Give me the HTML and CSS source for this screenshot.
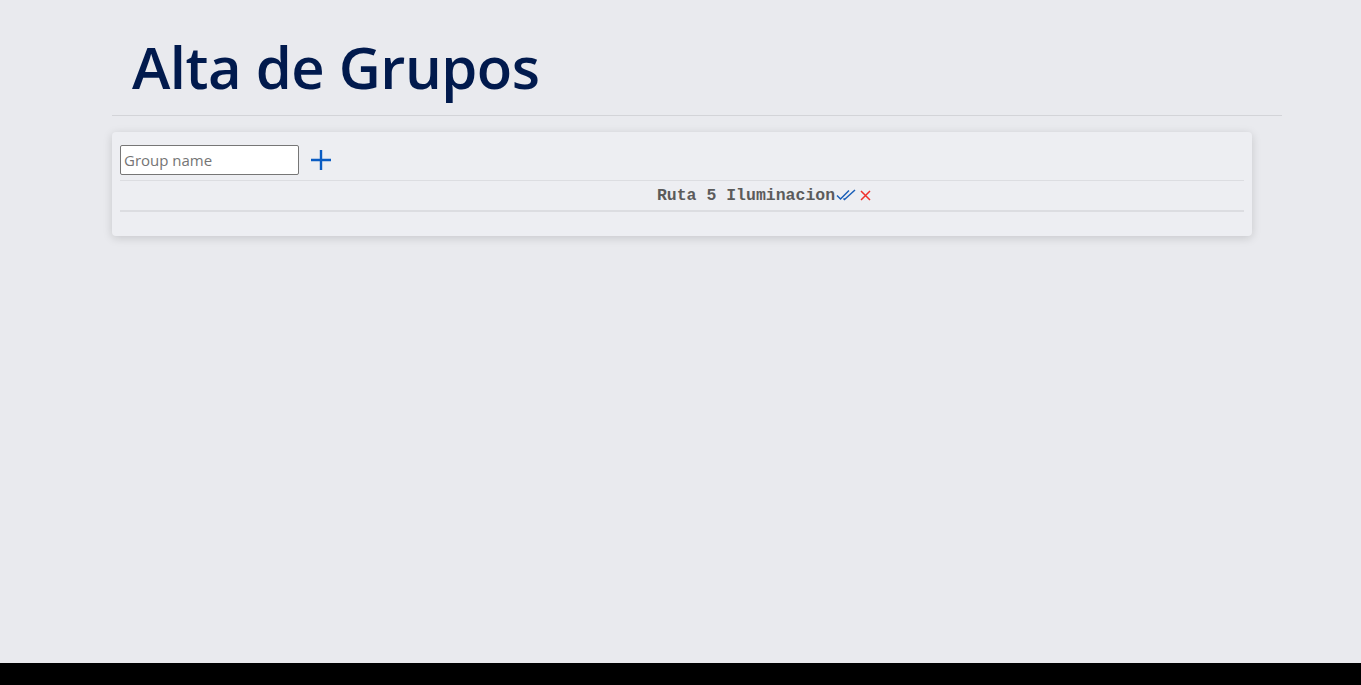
FILE: index.html
```html
<!DOCTYPE html>
<html>
<head>
<meta charset="utf-8">
<link rel="stylesheet" href="styles.css">
</head>
<body>
<div class="page">
  <header class="header">
    <h1 class="title">Alta de Grupos</h1>
  </header>
  <section class="card">
    <div class="add-row">
      <input class="name-input" type="text" placeholder="Group name">
      <button class="add-btn" aria-label="Add">
        <svg width="22" height="22" viewBox="0 0 22 22"><path d="M11 1v20M1 11h20" stroke="#0a5cc2" stroke-width="2.4" fill="none"/></svg>
      </button>
    </div>
    <div class="group-row">
      <span class="group-name">Ruta 5 Iluminacion</span>
      <svg class="icon-check" width="20" height="12" viewBox="0 0 20 12"><path d="M1 6.5l3.5 3.5L13 1.5M7.5 9.5l1 1L19 1" stroke="#1a5fb8" stroke-width="1.5" fill="none"/></svg>
      <svg class="icon-x" width="11" height="11" viewBox="0 0 11 11"><path d="M1 1l9 9M10 1l-9 9" stroke="#f0312c" stroke-width="1.5" fill="none"/></svg>
    </div>
  </section>
</div>
<div class="bottom-bar"></div>
</body>
</html>
```
FILE: styles.css
```css
html, body {
  margin: 0;
  padding: 0;
  height: 100%;
}
body {
  background: #e9eaee;
  font-family: "Open Sans", "Noto Sans", sans-serif;
  display: flex;
  flex-direction: column;
}
.page {
  flex: 1;
  width: 1170px;
  margin-left: 112px;
}
.header {
  border-bottom: 1px solid #d3d4d8;
  padding: 28px 0 9px 20px;
}
.title {
  margin: 0;
  font-size: 58px;
  font-weight: 600;
  line-height: 78px;
  color: #011a4d;
  letter-spacing: -0.5px;
}
.card {
  margin-top: 16px;
  width: 1124px;
  padding: 13px 8px 24px;
  background: #edeef2;
  border-radius: 4px;
  box-shadow: 0 2px 10px rgba(0,0,0,0.15);
}
.add-row {
  display: flex;
  align-items: center;
  gap: 11px;
  padding-bottom: 5px;
  border-bottom: 1px solid #dcdde1;
}
.name-input {
  width: 179px;
  height: 30px;
  box-sizing: border-box;
  border: 1px solid #767676;
  border-radius: 2px;
  padding: 0 3px;
  font-family: "Open Sans", sans-serif;
  font-size: 15px;
  background: #fff;
}
.name-input::placeholder {
  color: #757575;
}
.add-btn {
  background: none;
  border: none;
  padding: 0;
  width: 22px;
  height: 22px;
  display: flex;
}
.group-row {
  display: flex;
  justify-content: center;
  align-items: center;
  height: 29px;
  border-bottom: 2px solid #dcdde1;
  padding-left: 164px;
}
.group-name {
  font-family: "Liberation Mono", monospace;
  font-weight: bold;
  font-size: 16.5px;
  color: #5b5b5b;
}
.icon-check {
  margin-left: 1px;
  margin-top: -2px;
}
.icon-x {
  margin-left: 4px;
}
.bottom-bar {
  height: 22px;
  background: #000;
}
```
